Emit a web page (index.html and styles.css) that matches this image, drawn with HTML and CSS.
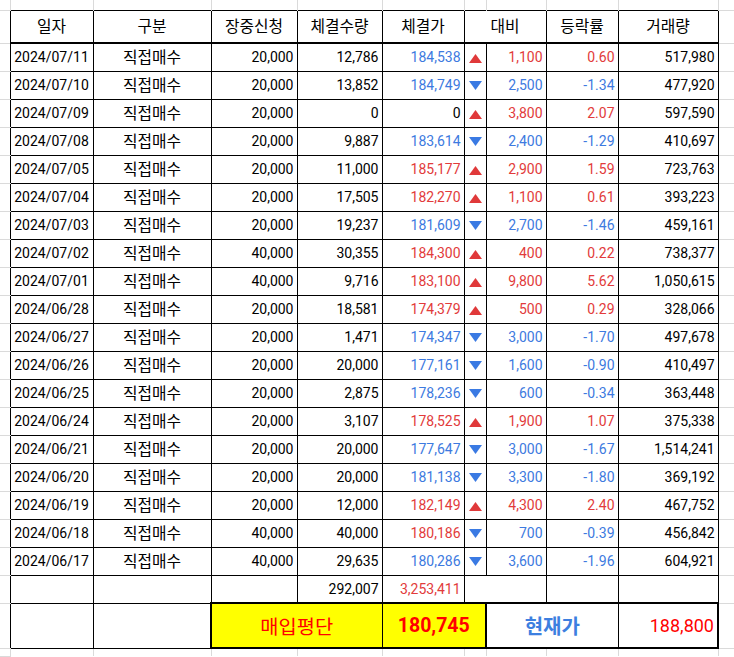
FILE: index.html
```html
<!DOCTYPE html>
<html lang="ko">
<head>
<meta charset="utf-8">
<title>직접매수 내역</title>
<link rel="stylesheet" href="styles.css">
</head>
<body>
<table class="sheet">
  <colgroup>
    <col class="c-gut"><col class="c-date"><col class="c-type"><col class="c-req"><col class="c-qty"><col class="c-price"><col class="c-arrow"><col class="c-diff"><col class="c-rate"><col class="c-vol"><col class="c-rest">
  </colgroup>
  <tbody>
    <tr class="r-top"><td class="g-corner"></td><td class="g-top"></td><td class="g-top"></td><td class="g-top"></td><td class="g-top"></td><td class="g-top"></td><td class="g-top"></td><td class="g-top"></td><td class="g-top"></td><td class="g-top"></td><td class="g-corner-r"></td></tr>
    <tr class="r-head">
      <td class="g-left"></td>
      <th class="hd">일자</th><th class="hd">구분</th><th class="hd">장중신청</th><th class="hd">체결수량</th><th class="hd">체결가</th><th class="hd" colspan="2">대비</th><th class="hd">등락률</th><th class="hd">거래량</th>
      <td class="g-right"></td>
    </tr>
    <tr class="r-data"><td class="g-left"></td><td class="date">2024/07/11</td><td class="kr">직접매수</td><td class="num">20,000</td><td class="num">12,786</td><td class="num blue">184,538</td><td class="arrow"><svg class="tri up" viewBox="0 0 13 9"><polygon points="6.5,0 13,9 0,9"/></svg></td><td class="num red">1,100</td><td class="num red">0.60</td><td class="num">517,980</td><td class="g-right"></td></tr>
    <tr class="r-data"><td class="g-left"></td><td class="date">2024/07/10</td><td class="kr">직접매수</td><td class="num">20,000</td><td class="num">13,852</td><td class="num blue">184,749</td><td class="arrow"><svg class="tri down" viewBox="0 0 13 9"><polygon points="0,0 13,0 6.5,9"/></svg></td><td class="num blue">2,500</td><td class="num blue">-1.34</td><td class="num">477,920</td><td class="g-right"></td></tr>
    <tr class="r-data"><td class="g-left"></td><td class="date">2024/07/09</td><td class="kr">직접매수</td><td class="num">20,000</td><td class="num">0</td><td class="num">0</td><td class="arrow"><svg class="tri up" viewBox="0 0 13 9"><polygon points="6.5,0 13,9 0,9"/></svg></td><td class="num red">3,800</td><td class="num red">2.07</td><td class="num">597,590</td><td class="g-right"></td></tr>
    <tr class="r-data"><td class="g-left"></td><td class="date">2024/07/08</td><td class="kr">직접매수</td><td class="num">20,000</td><td class="num">9,887</td><td class="num blue">183,614</td><td class="arrow"><svg class="tri down" viewBox="0 0 13 9"><polygon points="0,0 13,0 6.5,9"/></svg></td><td class="num blue">2,400</td><td class="num blue">-1.29</td><td class="num">410,697</td><td class="g-right"></td></tr>
    <tr class="r-data"><td class="g-left"></td><td class="date">2024/07/05</td><td class="kr">직접매수</td><td class="num">20,000</td><td class="num">11,000</td><td class="num red">185,177</td><td class="arrow"><svg class="tri up" viewBox="0 0 13 9"><polygon points="6.5,0 13,9 0,9"/></svg></td><td class="num red">2,900</td><td class="num red">1.59</td><td class="num">723,763</td><td class="g-right"></td></tr>
    <tr class="r-data"><td class="g-left"></td><td class="date">2024/07/04</td><td class="kr">직접매수</td><td class="num">20,000</td><td class="num">17,505</td><td class="num red">182,270</td><td class="arrow"><svg class="tri up" viewBox="0 0 13 9"><polygon points="6.5,0 13,9 0,9"/></svg></td><td class="num red">1,100</td><td class="num red">0.61</td><td class="num">393,223</td><td class="g-right"></td></tr>
    <tr class="r-data"><td class="g-left"></td><td class="date">2024/07/03</td><td class="kr">직접매수</td><td class="num">20,000</td><td class="num">19,237</td><td class="num blue">181,609</td><td class="arrow"><svg class="tri down" viewBox="0 0 13 9"><polygon points="0,0 13,0 6.5,9"/></svg></td><td class="num blue">2,700</td><td class="num blue">-1.46</td><td class="num">459,161</td><td class="g-right"></td></tr>
    <tr class="r-data"><td class="g-left"></td><td class="date">2024/07/02</td><td class="kr">직접매수</td><td class="num">40,000</td><td class="num">30,355</td><td class="num red">184,300</td><td class="arrow"><svg class="tri up" viewBox="0 0 13 9"><polygon points="6.5,0 13,9 0,9"/></svg></td><td class="num red">400</td><td class="num red">0.22</td><td class="num">738,377</td><td class="g-right"></td></tr>
    <tr class="r-data"><td class="g-left"></td><td class="date">2024/07/01</td><td class="kr">직접매수</td><td class="num">40,000</td><td class="num">9,716</td><td class="num red">183,100</td><td class="arrow"><svg class="tri up" viewBox="0 0 13 9"><polygon points="6.5,0 13,9 0,9"/></svg></td><td class="num red">9,800</td><td class="num red">5.62</td><td class="num">1,050,615</td><td class="g-right"></td></tr>
    <tr class="r-data"><td class="g-left"></td><td class="date">2024/06/28</td><td class="kr">직접매수</td><td class="num">20,000</td><td class="num">18,581</td><td class="num red">174,379</td><td class="arrow"><svg class="tri up" viewBox="0 0 13 9"><polygon points="6.5,0 13,9 0,9"/></svg></td><td class="num red">500</td><td class="num red">0.29</td><td class="num">328,066</td><td class="g-right"></td></tr>
    <tr class="r-data"><td class="g-left"></td><td class="date">2024/06/27</td><td class="kr">직접매수</td><td class="num">20,000</td><td class="num">1,471</td><td class="num blue">174,347</td><td class="arrow"><svg class="tri down" viewBox="0 0 13 9"><polygon points="0,0 13,0 6.5,9"/></svg></td><td class="num blue">3,000</td><td class="num blue">-1.70</td><td class="num">497,678</td><td class="g-right"></td></tr>
    <tr class="r-data"><td class="g-left"></td><td class="date">2024/06/26</td><td class="kr">직접매수</td><td class="num">20,000</td><td class="num">20,000</td><td class="num blue">177,161</td><td class="arrow"><svg class="tri down" viewBox="0 0 13 9"><polygon points="0,0 13,0 6.5,9"/></svg></td><td class="num blue">1,600</td><td class="num blue">-0.90</td><td class="num">410,497</td><td class="g-right"></td></tr>
    <tr class="r-data"><td class="g-left"></td><td class="date">2024/06/25</td><td class="kr">직접매수</td><td class="num">20,000</td><td class="num">2,875</td><td class="num blue">178,236</td><td class="arrow"><svg class="tri down" viewBox="0 0 13 9"><polygon points="0,0 13,0 6.5,9"/></svg></td><td class="num blue">600</td><td class="num blue">-0.34</td><td class="num">363,448</td><td class="g-right"></td></tr>
    <tr class="r-data"><td class="g-left"></td><td class="date">2024/06/24</td><td class="kr">직접매수</td><td class="num">20,000</td><td class="num">3,107</td><td class="num red">178,525</td><td class="arrow"><svg class="tri up" viewBox="0 0 13 9"><polygon points="6.5,0 13,9 0,9"/></svg></td><td class="num red">1,900</td><td class="num red">1.07</td><td class="num">375,338</td><td class="g-right"></td></tr>
    <tr class="r-data"><td class="g-left"></td><td class="date">2024/06/21</td><td class="kr">직접매수</td><td class="num">20,000</td><td class="num">20,000</td><td class="num blue">177,647</td><td class="arrow"><svg class="tri down" viewBox="0 0 13 9"><polygon points="0,0 13,0 6.5,9"/></svg></td><td class="num blue">3,000</td><td class="num blue">-1.67</td><td class="num">1,514,241</td><td class="g-right"></td></tr>
    <tr class="r-data"><td class="g-left"></td><td class="date">2024/06/20</td><td class="kr">직접매수</td><td class="num">20,000</td><td class="num">20,000</td><td class="num blue">181,138</td><td class="arrow"><svg class="tri down" viewBox="0 0 13 9"><polygon points="0,0 13,0 6.5,9"/></svg></td><td class="num blue">3,300</td><td class="num blue">-1.80</td><td class="num">369,192</td><td class="g-right"></td></tr>
    <tr class="r-data"><td class="g-left"></td><td class="date">2024/06/19</td><td class="kr">직접매수</td><td class="num">20,000</td><td class="num">12,000</td><td class="num red">182,149</td><td class="arrow"><svg class="tri up" viewBox="0 0 13 9"><polygon points="6.5,0 13,9 0,9"/></svg></td><td class="num red">4,300</td><td class="num red">2.40</td><td class="num">467,752</td><td class="g-right"></td></tr>
    <tr class="r-data"><td class="g-left"></td><td class="date">2024/06/18</td><td class="kr">직접매수</td><td class="num">40,000</td><td class="num">40,000</td><td class="num red">180,186</td><td class="arrow"><svg class="tri down" viewBox="0 0 13 9"><polygon points="0,0 13,0 6.5,9"/></svg></td><td class="num blue">700</td><td class="num blue">-0.39</td><td class="num">456,842</td><td class="g-right"></td></tr>
    <tr class="r-data"><td class="g-left"></td><td class="date">2024/06/17</td><td class="kr">직접매수</td><td class="num">40,000</td><td class="num">29,635</td><td class="num blue">180,286</td><td class="arrow"><svg class="tri down" viewBox="0 0 13 9"><polygon points="0,0 13,0 6.5,9"/></svg></td><td class="num blue">3,600</td><td class="num blue">-1.96</td><td class="num">604,921</td><td class="g-right"></td></tr>
    <tr class="r-data"><td class="g-left"></td><td></td><td></td><td></td><td class="num">292,007</td><td class="num red">3,253,411</td><td colspan="2"></td><td></td><td></td><td class="g-right"></td></tr>
    <tr class="r-last">
      <td class="g-left"></td><td></td><td></td>
      <td class="avg-label" colspan="2">매입평단</td>
      <td class="avg-value" colspan="2">180,745</td>
      <td class="cur-label" colspan="2">현재가</td>
      <td class="cur-value">188,800</td>
      <td class="g-right"></td>
    </tr>
    <tr class="r-bot"><td class="g-corner"></td><td class="g-bot"></td><td class="g-bot"></td><td class="g-bot"></td><td class="g-bot"></td><td class="g-bot"></td><td class="g-bot"></td><td class="g-bot"></td><td class="g-bot"></td><td class="g-bot"></td><td class="g-corner-r"></td></tr>
  </tbody>
</table>
</body>
</html>
```
FILE: styles.css
```css
html, body {
  margin: 0;
  padding: 0;
  background: #ffffff;
}

.sheet {
  width: 734px;
  table-layout: fixed;
  border-collapse: collapse;
  font-family: Roboto, "Noto Sans CJK KR", sans-serif;
  font-size: 14px;
  color: #000000;
}

.c-gut { width: 10px; }
.c-date { width: 83px; }
.c-type { width: 118px; }
.c-req { width: 86px; }
.c-qty { width: 85px; }
.c-price { width: 82px; }
.c-arrow { width: 22px; }
.c-diff { width: 60px; }
.c-rate { width: 72px; }
.c-vol { width: 100px; }
.c-rest { width: 16px; }

.r-top { height: 10px; }
.r-head { height: 33px; }
.r-data { height: 28px; }
.r-last { height: 45px; }
.r-bot { height: 8px; }

.sheet td, .sheet th {
  padding: 0 3px;
  border: 1px solid #000000;
  white-space: nowrap;
  overflow: hidden;
  line-height: 16px;
  vertical-align: middle;
}

/* outside gridlines (spreadsheet canvas) */
.sheet td.g-corner, .sheet td.g-corner-r, .sheet td.g-top, .sheet td.g-bot,
.sheet td.g-left, .sheet td.g-right {
  padding: 0;
  border: none;
}
.sheet td.g-top, .sheet td.g-bot {
  border-left: 1px solid #dadada;
  border-right: 1px solid #dadada;
}
.sheet td.g-corner {
  border-right: 1px solid #dadada;
  border-bottom: 1px solid #dadada;
}
.sheet td.g-left {
  border-top: 1px solid #dadada;
  border-bottom: 1px solid #dadada;
}
.sheet td.g-right {
  border-top: 1px solid #dadada;
  border-bottom: 1px solid #dadada;
}

.sheet th.hd {
  font-weight: normal;
  font-family: "Noto Sans CJK KR", sans-serif;
  font-size: 15.8px;
  text-align: center;
  border-bottom: 2px solid #000000;
}

.date { text-align: center; }
.kr {
  text-align: center;
  font-family: "Noto Sans CJK KR", sans-serif;
  font-size: 15.8px;
}
.num { text-align: right; padding-top: 2px; }
.red { color: #e23b3b; }
.blue { color: #3d7ae0; }

.arrow {
  text-align: center;
  padding: 0;
}
.tri {
  display: block;
  width: 13px;
  height: 9px;
  margin: 0 auto;
}
.tri.up { fill: #e0393a; margin-top: 3px; }
.tri.down { fill: #3a7ae3; margin-top: 1px; }

.sheet td.avg-label {
  background: #ffff00;
  color: #ff0000;
  font-family: "Noto Sans CJK KR", sans-serif;
  font-size: 19.8px;
  text-align: center;
  border: 2px solid #000000;
  border-right: 1px solid #000000;
  line-height: 22px;
}
.sheet td.avg-value {
  background: #ffff00;
  color: #ff0000;
  font-weight: bold;
  font-size: 19.5px;
  text-align: center;
  border: 2px solid #000000;
  border-left: 1px solid #000000;
  line-height: 22px;
}
.sheet td.cur-label {
  color: #3d7fe0;
  font-family: "Noto Sans CJK KR", sans-serif;
  font-weight: bold;
  font-size: 20px;
  text-align: center;
  border: 2px solid #000000;
  border-right: 1px solid #000000;
  line-height: 22px;
}
.sheet td.cur-value {
  color: #ff0000;
  font-size: 18px;
  text-align: right;
  border: 2px solid #000000;
  border-left: 1px solid #000000;
  line-height: 22px;
}
```
